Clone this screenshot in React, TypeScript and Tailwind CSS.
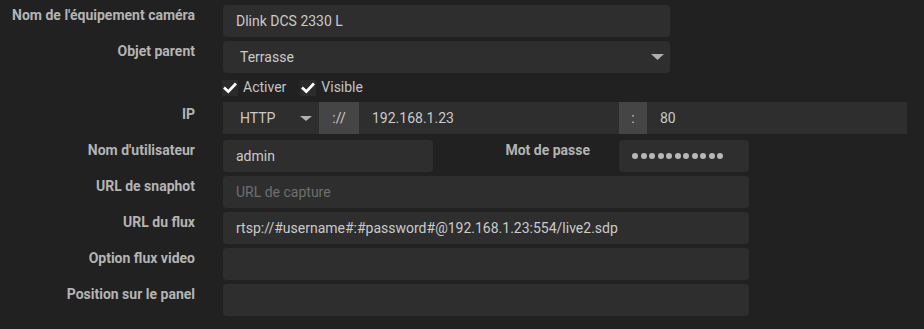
import React from 'react';

const font = { fontFamily: 'Roboto, "Noto Sans", sans-serif' };

const Label: React.FC<{ children: React.ReactNode; className?: string }> = ({ children, className = '' }) => (
    <div className={`w-[195px] shrink-0 text-right text-[14px] font-bold leading-[18px] pt-[1px] text-[#b4b4b4] ${className}`}>
        {children}
    </div>
);

const Caret: React.FC<{ w: number; h: number }> = ({ w, h }) => (
    <svg width={w} height={h} viewBox={`0 0 ${w} ${h}`}>
        <polygon points={`0,0 ${w},0 ${w / 2},${h}`} fill="#b0b0b0" />
    </svg>
);

const Field: React.FC<{ value?: string; placeholder?: string; className?: string }> = ({ value, placeholder, className = 'w-[526px]' }) => (
    <div className={`h-8 rounded bg-[#2e2e2e] px-[13px] flex items-center text-[14px] ${className}`}>
        {value ? <span className="text-[#cacaca]">{value}</span> : <span className="text-[#6f6f6f]">{placeholder}</span>}
    </div>
);

const Check: React.FC<{ label: string }> = ({ label }) => (
    <label className="flex items-center gap-[5px] text-[14px] text-[#c4c4c4]">
        <span className="w-4 h-4 bg-[#2b2b2b] flex items-center justify-center">
            <svg width="16" height="16" viewBox="0 0 16 16">
                <path d="M3 8.5 L6.3 11.6 L13 4.6" stroke="#ffffff" strokeWidth="2.8" fill="none" strokeLinecap="square" />
            </svg>
        </span>
        {label}
    </label>
);

export default function App() {
    return (
        <div className="min-h-screen bg-[#212121] pt-[5px]" style={font}>
            <div className="flex flex-col gap-1">
                <div className="flex gap-[28px]">
                    <Label>Nom de l'équipement caméra</Label>
                    <Field value="Dlink DCS 2330 L" className="w-[447px]" />
                </div>
                <div className="flex gap-[28px]">
                    <Label>Objet parent</Label>
                    <div className="h-8 w-[447px] rounded bg-[#2e2e2e] pl-[17px] pr-[6px] flex items-center justify-between text-[14px] text-[#cacaca]">
                        <span>Terrasse</span>
                        <Caret w={13} h={6} />
                    </div>
                </div>
                <div className="flex gap-[27px] h-[21px] items-end">
                    <div className="w-[195px]" />
                    <div className="flex items-center gap-[14px]">
                        <Check label="Activer" />
                        <Check label="Visible" />
                    </div>
                </div>
                <div className="flex gap-[28px]">
                    <Label className="pt-[3px]">IP</Label>
                    <div className="flex h-8 w-[684px] text-[14px] text-[#cacaca]">
                        <div className="w-[96px] bg-[#2e2e2e] pl-[17px] pr-[7px] flex items-center justify-between">
                            <span>HTTP</span>
                            <Caret w={12} h={5} />
                        </div>
                        <div className="w-[40px] bg-[#454545] flex items-center justify-center">://</div>
                        <div className="w-[260px] bg-[#2e2e2e] px-[13px] flex items-center">192.168.1.23</div>
                        <div className="w-[28px] bg-[#454545] flex items-center justify-center">:</div>
                        <div className="flex-1 bg-[#2e2e2e] px-[13px] flex items-center">80</div>
                    </div>
                </div>
                <div className="flex gap-[28px] mt-[2px]">
                    <Label>Nom d'utilisateur</Label>
                    <Field value="admin" className="w-[210px]" />
                    <div className="w-[157px] -ml-[28px] text-right text-[14px] font-bold leading-[18px] pt-[1px] text-[#b4b4b4]">Mot de passe</div>
                    <div className="h-8 w-[130px] -ml-[-1px] rounded bg-[#2e2e2e] px-[13px] flex items-center gap-[2.5px]">
                        {Array.from({ length: 11 }).map((_, i) => (
                            <span key={i} className="w-[6px] h-[6px] rounded-full bg-[#b8b8b8]" />
                        ))}
                    </div>
                </div>
                <div className="flex gap-[28px]">
                    <Label>URL de snaphot</Label>
                    <Field placeholder="URL de capture" />
                </div>
                <div className="flex gap-[28px]">
                    <Label>URL du flux</Label>
                    <Field value="rtsp://#username#:#password#@192.168.1.23:554/live2.sdp" />
                </div>
                <div className="flex gap-[28px]">
                    <Label>Option flux video</Label>
                    <Field />
                </div>
                <div className="flex gap-[28px]">
                    <Label>Position sur le panel</Label>
                    <Field />
                </div>
            </div>
        </div>
    );
}
